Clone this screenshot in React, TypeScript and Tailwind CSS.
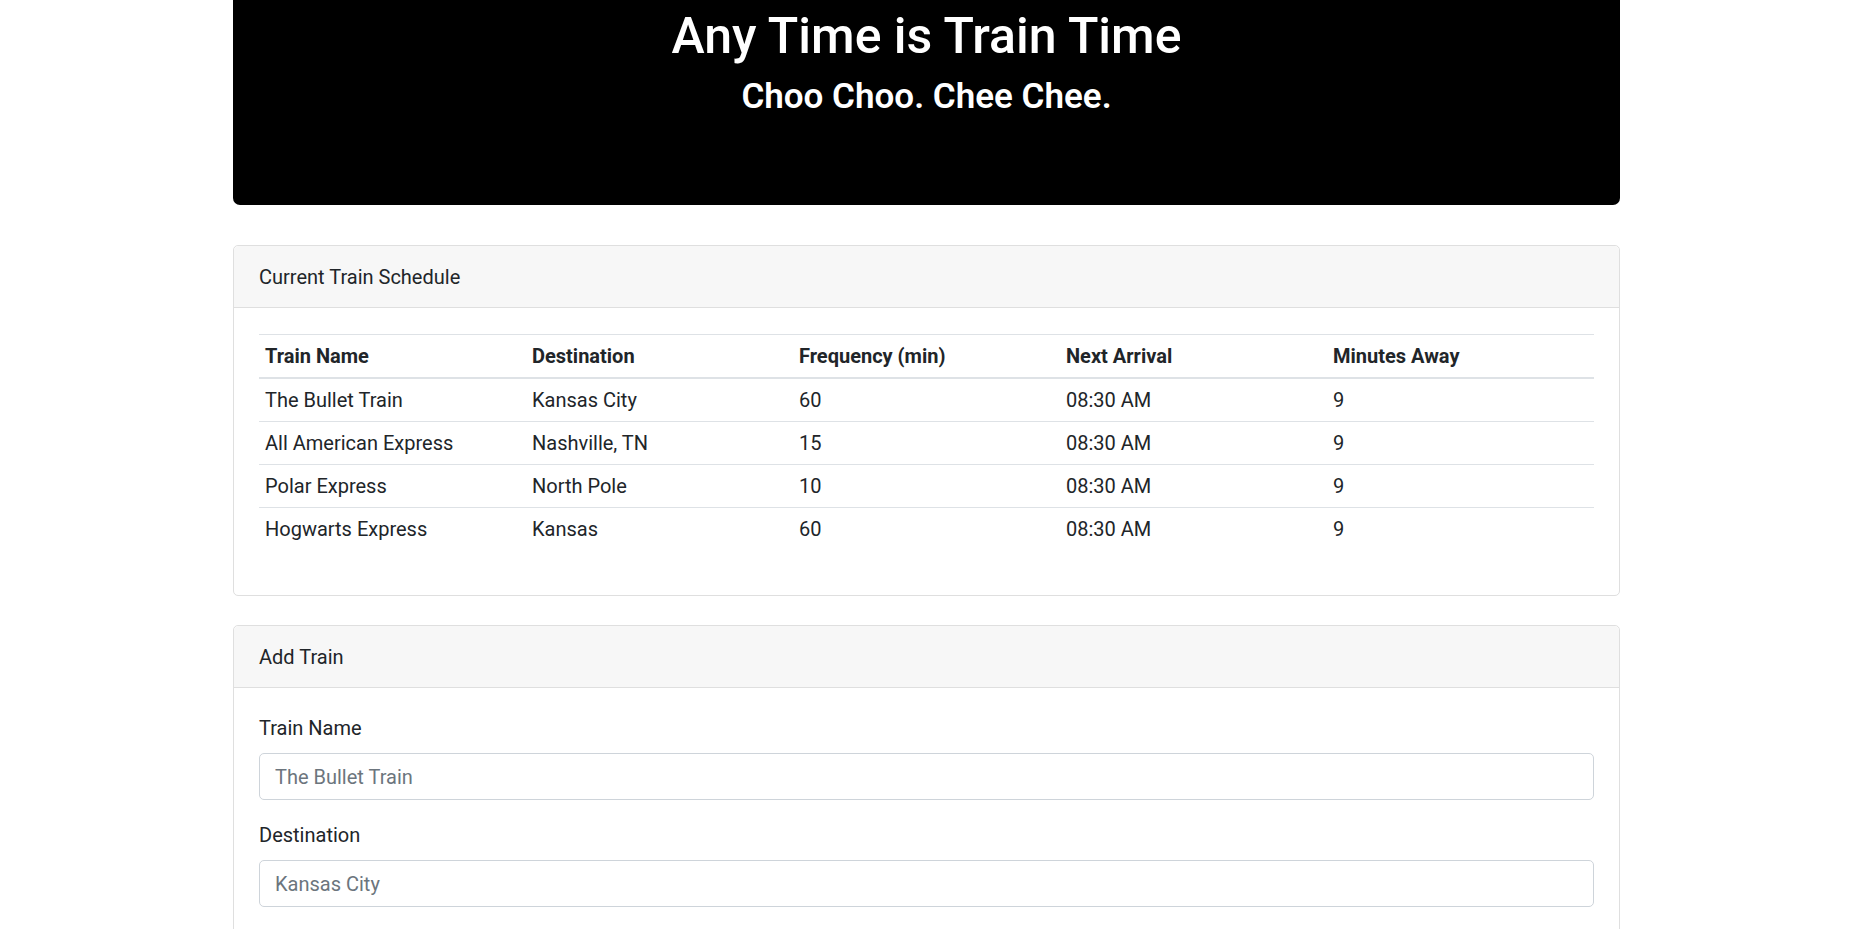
import React from "react";

interface Train {
  name: string;
  destination: string;
  frequency: number;
  nextArrival: string;
  minutesAway: number;
}

const trains: Train[] = [
  { name: "The Bullet Train", destination: "Kansas City", frequency: 60, nextArrival: "08:30 AM", minutesAway: 9 },
  { name: "All American Express", destination: "Nashville, TN", frequency: 15, nextArrival: "08:30 AM", minutesAway: 9 },
  { name: "Polar Express", destination: "North Pole", frequency: 10, nextArrival: "08:30 AM", minutesAway: 9 },
  { name: "Hogwarts Express", destination: "Kansas", frequency: 60, nextArrival: "08:30 AM", minutesAway: 9 },
];

const fields = [
  { label: "Train Name", placeholder: "The Bullet Train" },
  { label: "Destination", placeholder: "Kansas City" },
];

export default function App() {
  return (
    <div className="min-h-screen bg-white text-[20px] leading-[30px] text-[#212529] font-['Roboto','Liberation_Sans',sans-serif]">
      <div className="pl-[233px]">
        <div className="w-[1387px]">
          {/* Jumbotron */}
          <div className="rounded-b-[7px] bg-black pt-[6px] pb-[77px] text-center text-white">
            <h1 className="mb-[10px] text-[50px] font-medium leading-[60px]">Any Time is Train Time</h1>
            <h3 className="mb-[10px] text-[35px] font-semibold leading-[42px]">Choo Choo. Chee Chee.</h3>
          </div>

          {/* Schedule */}
          <div className="mt-[40px] rounded-[5px] border border-[#dfdfdf] bg-white">
            <div className="rounded-t-[5px] border-b border-[#dfdfdf] bg-[#f7f7f7] px-[25px] pt-[16px] pb-[15px]">
              Current Train Schedule
            </div>
            <div className="px-[25px] pt-[26px] pb-[25px]">
              <table className="mb-[20px] w-full table-fixed border-collapse text-left">
                <thead>
                  <tr>
                    {["Train Name", "Destination", "Frequency (min)", "Next Arrival", "Minutes Away"].map((h) => (
                      <th key={h} className="border-t border-b-2 border-t-[#dee2e6] border-b-[#dee2e6] px-[6px] py-[6px] font-bold">
                        {h}
                      </th>
                    ))}
                  </tr>
                </thead>
                <tbody>
                  {trains.map((t) => (
                    <tr key={t.name}>
                      <td className="border-t border-[#dee2e6] p-[6px]">{t.name}</td>
                      <td className="border-t border-[#dee2e6] p-[6px]">{t.destination}</td>
                      <td className="border-t border-[#dee2e6] p-[6px]">{t.frequency}</td>
                      <td className="border-t border-[#dee2e6] p-[6px]">{t.nextArrival}</td>
                      <td className="border-t border-[#dee2e6] p-[6px]">{t.minutesAway}</td>
                    </tr>
                  ))}
                </tbody>
              </table>
            </div>
          </div>

          {/* Add Train */}
          <div className="mt-[29px] mb-[40px] rounded-[5px] border border-[#dfdfdf] bg-white">
            <div className="rounded-t-[5px] border-b border-[#dfdfdf] bg-[#f7f7f7] px-[25px] pt-[16px] pb-[15px]">Add Train</div>
            <div className="px-[25px] pt-[25px] pb-[25px]">
              {fields.map((f) => (
                <div key={f.label} className="mb-[20px]">
                  <label className="mb-[10px] block">{f.label}</label>
                  <input
                    type="text"
                    placeholder={f.placeholder}
                    className="block h-[47px] w-full rounded-[5px] border border-[#ced4da] bg-white px-[15px] py-[7px] text-[20px] leading-[30px] text-[#495057] placeholder:text-[#6c757d] outline-none"
                  />
                </div>
              ))}
            </div>
          </div>
        </div>
      </div>
    </div>
  );
}
